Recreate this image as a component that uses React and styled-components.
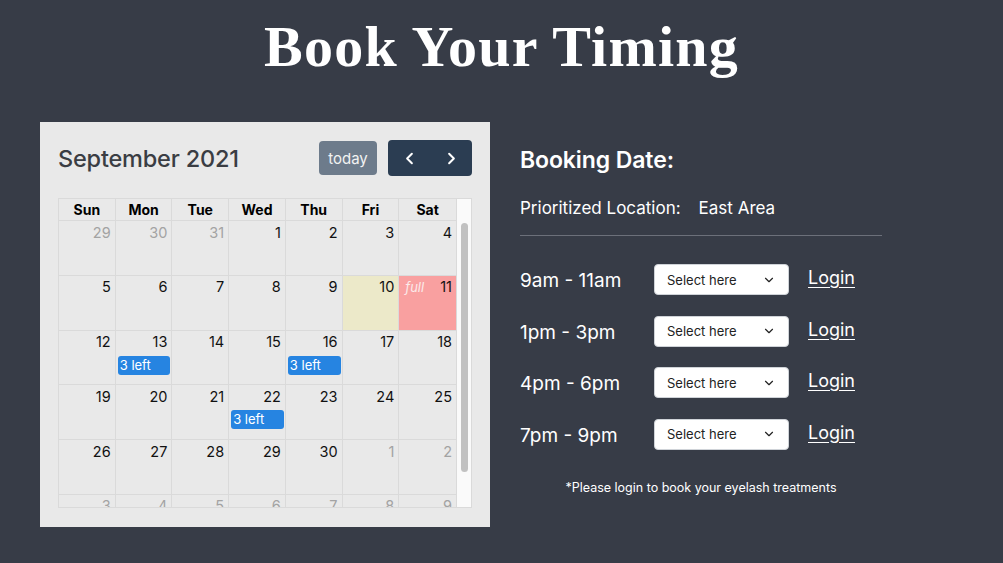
import React from 'react';
import styled, { createGlobalStyle } from 'styled-components';
import { ChevronLeft, ChevronRight, ChevronDown } from 'lucide-react';

const GlobalStyle = createGlobalStyle`
  html, body {
    margin: 0;
    padding: 0;
    background: #373c47;
  }
  body {
    font-family: Inter, "Liberation Sans", sans-serif;
  }
`;

const Page = styled.div`
  width: 1003px;
  height: 563px;
  overflow: hidden;
  background: #373c47;
  color: #ffffff;
`;

const Title = styled.h1`
  margin: 0;
  padding-top: 15px;
  font-family: "Liberation Serif", "DejaVu Serif", serif;
  font-weight: 700;
  font-size: 58px;
  line-height: 64px;
  text-align: center;
  letter-spacing: 1.2px;
`;

const Content = styled.div`
  display: flex;
  align-items: flex-start;
  gap: 30px;
  padding: 43px 0 0 40px;
`;

const CalendarCard = styled.div`
  width: 450px;
  box-sizing: border-box;
  background: #e9e9e9;
  padding: 18px 18px 19px;
  color: #000;
`;

const Toolbar = styled.div`
  display: flex;
  align-items: center;
  height: 36px;
  margin-bottom: 22px;
`;

const MonthTitle = styled.h2`
  margin: 0;
  flex: 1;
  font-size: 23.5px;
  font-weight: 500;
  color: #3a3d43;
  letter-spacing: -0.2px;
`;

const TodayButton = styled.div`
  background: #6d7b8b;
  color: #f2f2f2;
  font-size: 15px;
  height: 34px;
  width: 58px;
  border-radius: 4px;
  display: flex;
  align-items: center;
  justify-content: center;
  margin-right: 11px;
`;

const NavGroup = styled.div`
  display: flex;
  background: #2b3d52;
  border-radius: 4px;
  height: 36px;
  width: 84px;
`;

const NavButton = styled.div`
  flex: 1;
  display: flex;
  align-items: center;
  justify-content: center;
  color: #fff;
`;

const Grid = styled.div`
  border: 1px solid #dadada;
  height: 310px;
  box-sizing: border-box;
  display: flex;
`;

const MainCol = styled.div`
  flex: 1;
  display: flex;
  flex-direction: column;
  overflow: hidden;
`;

const HeaderRow = styled.div`
  display: grid;
  grid-template-columns: repeat(7, 1fr);
  height: 22px;
  flex-shrink: 0;
`;

const HeaderCell = styled.div`
  font-size: 14px;
  font-weight: 700;
  display: flex;
  align-items: center;
  justify-content: center;
  border-right: 1px solid #dadada;
  border-bottom: 1px solid #dadada;
  &:last-child {
    border-right: none;
  }
`;

const ScrollTrack = styled.div`
  width: 15px;
  flex-shrink: 0;
  background: #fafafa;
  border-left: 1px solid #dadada;
  padding: 24px 3px 0 4px;
  box-sizing: border-box;
`;

const ScrollThumb = styled.div`
  height: 249px;
  background: #c1c1c1;
  border-radius: 4px;
`;

const Body = styled.div`
  flex: 1;
  overflow: hidden;
  display: grid;
  grid-template-columns: repeat(7, 1fr);
  grid-auto-rows: 54.8px;
`;

const DayCell = styled.div`
  box-sizing: border-box;
  border-right: 1px solid #dadada;
  border-bottom: 1px solid #dadada;
  background: ${p => p.$bg || 'transparent'};
  &:nth-child(7n) {
    border-right: none;
  }
`;

const DayTop = styled.div`
  display: flex;
  justify-content: space-between;
  align-items: center;
  padding: 1px 4px 0 6px;
  height: 20px;
`;

const DayNum = styled.span`
  margin-left: auto;
  font-size: 14.5px;
  color: ${p => (p.$muted ? '#a3a3a3' : '#111')};
`;

const FullTag = styled.span`
  font-size: 13px;
  font-style: italic;
  color: #fbeaea;
`;

const EventPill = styled.div`
  margin: 4px 1px 0 2px;
  background: #2684e1;
  color: #fff;
  font-size: 13px;
  line-height: 19px;
  height: 19px;
  padding-left: 2px;
  border-radius: 3px;
`;

const Panel = styled.div`
  width: 362px;
  padding-top: 24px;
`;

const PanelHeading = styled.h3`
  margin: 0 0 22px;
  font-size: 23px;
  font-weight: 600;
  line-height: 28px;
  letter-spacing: -0.1px;
`;

const LocationRow = styled.div`
  display: flex;
  gap: 18px;
  font-size: 17px;
  line-height: 24px;
  padding-bottom: 15px;
  border-bottom: 1px solid #6c707a;
`;

const SlotList = styled.div`
  display: flex;
  flex-direction: column;
  gap: 20.5px;
  margin-top: 28px;
`;

const SlotRow = styled.div`
  display: flex;
  align-items: center;
  height: 31px;
`;

const SlotLabel = styled.span`
  width: 134px;
  font-size: 19px;
  padding-top: 2px;
`;

const SelectBox = styled.div`
  width: 135px;
  height: 31px;
  box-sizing: border-box;
  background: #fff;
  border: 1px solid #cfd3d8;
  border-radius: 4px;
  display: flex;
  align-items: center;
  justify-content: space-between;
  padding: 0 12px;
  color: #222;
  font-size: 13px;
`;

const LoginLink = styled.a`
  margin-left: 19px;
  margin-top: -4px;
  color: #fff;
  font-size: 18px;
  text-decoration: underline;
  text-underline-offset: 3px;
`;

const Note = styled.p`
  margin: 30px 0 0;
  text-align: center;
  font-size: 12.5px;
`;

const weeks = [
  [[29, 1], [30, 1], [31, 1], [1], [2], [3], [4]],
  [[5], [6], [7], [8], [9], [10], [11]],
  [[12], [13], [14], [15], [16], [17], [18]],
  [[19], [20], [21], [22], [23], [24], [25]],
  [[26], [27], [28], [29], [30], [1, 1], [2, 1]],
  [[3, 1], [4, 1], [5, 1], [6, 1], [7, 1], [8, 1], [9, 1]],
];

const eventDays = [13, 16, 22];
const dayNames = ['Sun', 'Mon', 'Tue', 'Wed', 'Thu', 'Fri', 'Sat'];
const slots = ['9am - 11am', '1pm - 3pm', '4pm - 6pm', '7pm - 9pm'];

function Calendar() {
  return (
    <CalendarCard>
      <Toolbar>
        <MonthTitle>September 2021</MonthTitle>
        <TodayButton>today</TodayButton>
        <NavGroup>
          <NavButton><ChevronLeft size={19} strokeWidth={2.5} /></NavButton>
          <NavButton><ChevronRight size={19} strokeWidth={2.5} /></NavButton>
        </NavGroup>
      </Toolbar>
      <Grid>
        <MainCol>
          <HeaderRow>
            {dayNames.map(d => <HeaderCell key={d}>{d}</HeaderCell>)}
          </HeaderRow>
          <Body>
            {weeks.flat().map(([n, muted], i) => {
              const current = !muted;
              let bg;
              if (current && n === 10) bg = '#ece9c9';
              if (current && n === 11) bg = '#f9a0a0';
              return (
                <DayCell key={i} $bg={bg}>
                  <DayTop>
                    {current && n === 11 && <FullTag>full</FullTag>}
                    <DayNum $muted={muted}>{n}</DayNum>
                  </DayTop>
                  {current && eventDays.includes(n) && <EventPill>3 left</EventPill>}
                </DayCell>
              );
            })}
          </Body>
        </MainCol>
        <ScrollTrack>
          <ScrollThumb />
        </ScrollTrack>
      </Grid>
    </CalendarCard>
  );
}

function BookingPanel() {
  return (
    <Panel>
      <PanelHeading>Booking Date:</PanelHeading>
      <LocationRow>
        <span>Prioritized Location:</span>
        <span>East Area</span>
      </LocationRow>
      <SlotList>
        {slots.map(s => (
          <SlotRow key={s}>
            <SlotLabel>{s}</SlotLabel>
            <SelectBox>
              <span>Select here</span>
              <ChevronDown size={14} strokeWidth={2} />
            </SelectBox>
            <LoginLink>Login</LoginLink>
          </SlotRow>
        ))}
      </SlotList>
      <Note>*Please login to book your eyelash treatments</Note>
    </Panel>
  );
}

export default function App() {
  return (
    <Page>
      <GlobalStyle />
      <Title>Book Your Timing</Title>
      <Content>
        <Calendar />
        <BookingPanel />
      </Content>
    </Page>
  );
}
